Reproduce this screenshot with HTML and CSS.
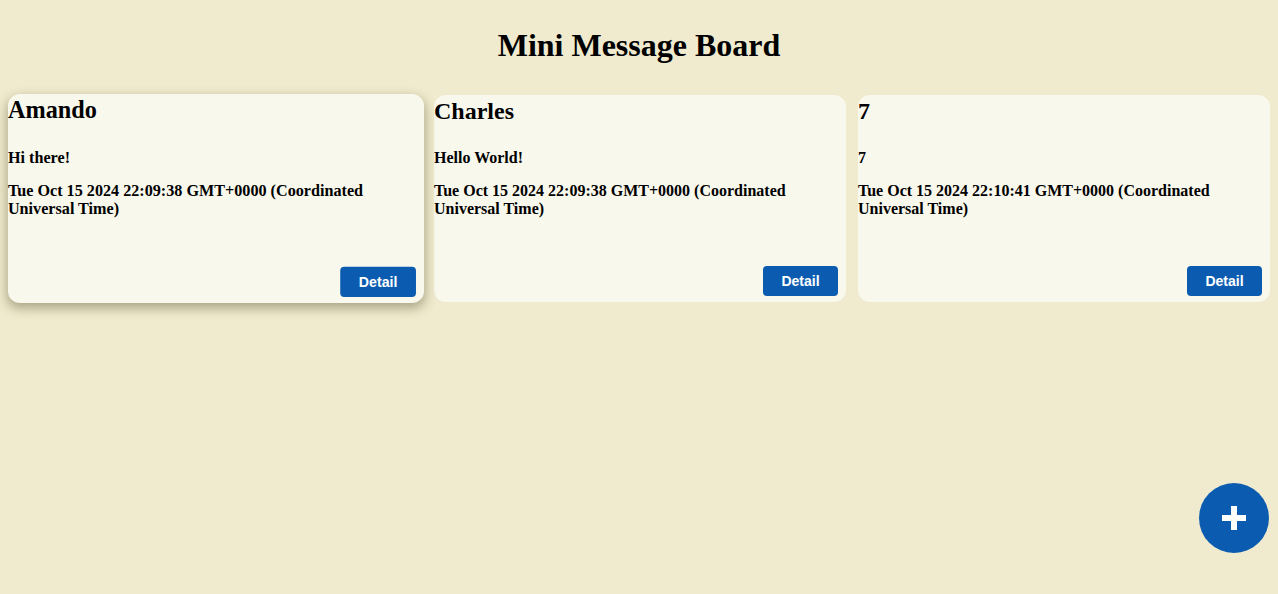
FILE: index.html
```html
<!DOCTYPE html>
<html lang="en">
<head>
<meta charset="utf-8">
<title>Mini Message Board</title>
<link rel="stylesheet" href="styles.css">
</head>
<body>
<h1 class="title">Mini Message Board</h1>
<main class="board">
  <article class="card raised">
    <h2 class="author">Amando</h2>
    <p class="text">Hi there!</p>
    <p class="text">Tue Oct 15 2024 22:09:38 GMT+0000 (Coordinated Universal Time)</p>
    <button class="detail">Detail</button>
  </article>
  <article class="card">
    <h2 class="author">Charles</h2>
    <p class="text">Hello World!</p>
    <p class="text">Tue Oct 15 2024 22:09:38 GMT+0000 (Coordinated Universal Time)</p>
    <button class="detail">Detail</button>
  </article>
  <article class="card">
    <h2 class="author">7</h2>
    <p class="text">7</p>
    <p class="text">Tue Oct 15 2024 22:10:41 GMT+0000 (Coordinated Universal Time)</p>
    <button class="detail">Detail</button>
  </article>
</main>
<button class="fab" aria-label="New message">
  <svg width="26" height="26" viewBox="0 0 26 26"><rect x="10" y="1" width="6" height="24" fill="#fff"/><rect x="1" y="10" width="24" height="6" fill="#fff"/></svg>
</button>
</body>
</html>
```

FILE: styles.css
```css
html, body {
  height: 100%;
}
body {
  margin: 0;
  padding: 8px;
  box-sizing: border-box;
  background: #f0ebce;
  font-family: "Liberation Serif", "Times New Roman", serif;
  color: #000;
}
.title {
  margin: 18.5px 0 31.7px;
  font-size: 32px;
  line-height: 36.8px;
  font-weight: bold;
  text-align: center;
}
.board {
  display: grid;
  grid-template-columns: repeat(3, 1fr);
  gap: 12px;
  padding-left: 2px;
  align-items: start;
}
.card {
  height: 207px;
  box-sizing: border-box;
  background: #f9f8ed;
  border-radius: 12px;
  display: flex;
  flex-direction: column;
}
.raised {
  transform: scale(1.01);
  box-shadow: 0 4px 12px rgba(60, 55, 20, 0.4);
}
.author {
  margin: 3px 0 23px;
  font-size: 24px;
  line-height: 27.6px;
  font-weight: bold;
}
.text {
  margin: 0 0 15px;
  font-size: 16px;
  line-height: 18.4px;
  font-weight: bold;
}
.detail {
  margin: auto 8px 6px auto;
  height: 30px;
  width: 75px;
  padding: 0;
  border: none;
  border-radius: 4px;
  background: #0b5cb0;
  color: #fff;
  font-family: "Liberation Sans", Arial, sans-serif;
  font-size: 14px;
  font-weight: bold;
}
.fab {
  position: fixed;
  right: 9px;
  bottom: 41px;
  width: 70px;
  height: 70px;
  border: none;
  border-radius: 50%;
  padding: 0;
  background: #0b5cb0;
  display: flex;
  align-items: center;
  justify-content: center;
}
.fab svg {
  display: block;
}
```
